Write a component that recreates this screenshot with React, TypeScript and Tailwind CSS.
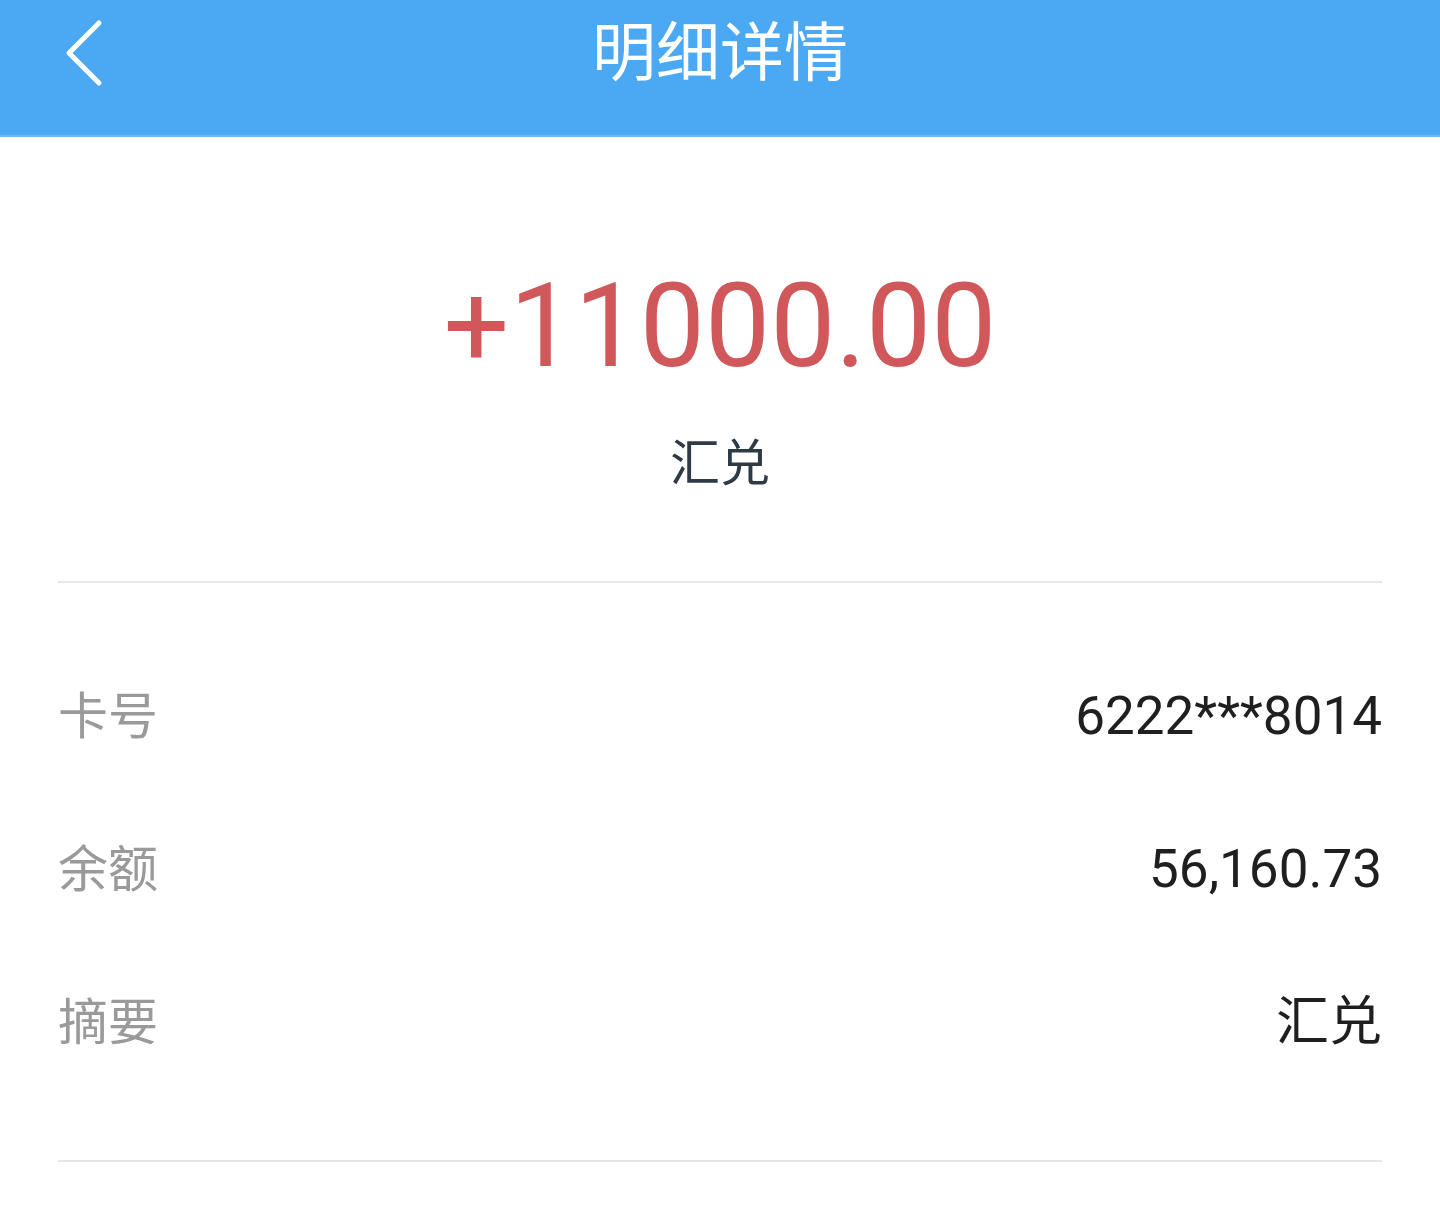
const FONT = "font-['Roboto','Noto_Sans_CJK_SC',sans-serif]";

type Row = { label: string; value: string };

const rows: Row[] = [
  { label: "卡号", value: "6222***8014" },
  { label: "余额", value: "56,160.73" },
  { label: "摘要", value: "汇兑" },
];

function BackIcon() {
  return (
    <svg width="44" height="72" viewBox="0 0 44 72" fill="none">
      <polyline
        points="37,6 7,36 37,66"
        stroke="white"
        strokeWidth="5"
        strokeLinecap="round"
        strokeLinejoin="round"
      />
    </svg>
  );
}

export default function App() {
  return (
    <div className={`min-h-[1206px] w-full bg-white ${FONT}`}>
      {/* header */}
      <header className="relative flex h-[137px] items-center justify-center bg-[#4aa9f2] border-b-2 border-[#6cbaf5]">
        <button className="absolute left-[62px] top-[17px]">
          <BackIcon />
        </button>
        <h1 className="mb-[28px] text-[64px] leading-none text-white">明细详情</h1>
      </header>

      {/* amount */}
      <section className="flex flex-col items-center pt-[131px]">
        <div className="text-[116px] leading-none text-[#d0585b]">+11000.00</div>
        <div className="mt-[55px] text-[50px] leading-none text-[#2e3a45]">汇兑</div>
      </section>

      <div className="mx-[58px] mt-[92px] h-[2px] bg-[#e6e6e6]" />

      <div className="mx-[58px] pt-[57px]">
        {rows.map((r) => (
          <div key={r.label} className="flex h-[153px] items-center justify-between">
            <span className="text-[50px] leading-none text-[#9a9a9a]">{r.label}</span>
            <span className="text-[53px] leading-none text-[#1f1f1f]">{r.value}</span>
          </div>
        ))}
      </div>

      <div className="mx-[58px] mt-[61px] h-[2px] bg-[#e6e6e6]" />
    </div>
  );
}
